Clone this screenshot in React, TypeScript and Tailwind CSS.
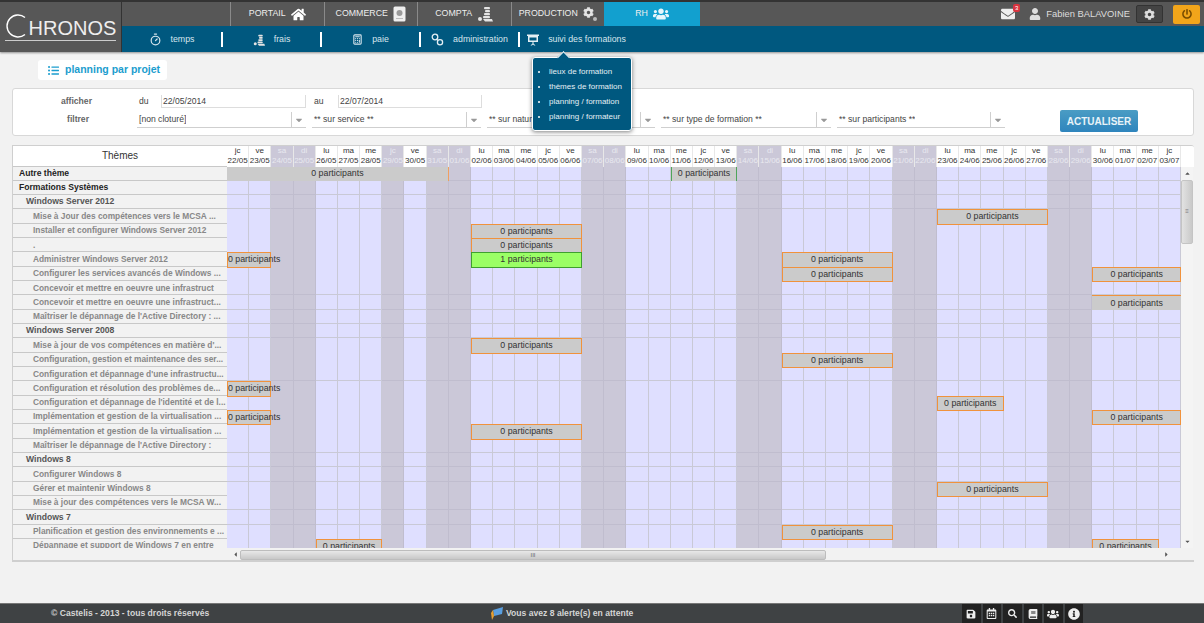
import React from "react";
import { Timer, Calculator } from "lucide-react";
import {
  FaHome, FaUsers, FaCog, FaEnvelope, FaUser, FaPowerOff, FaSave, FaSearch, FaInfoCircle, FaBook, FaListUl,
  FaCaretDown, FaCaretUp, FaCaretLeft, FaCaretRight, FaRegCalendarAlt,
} from "react-icons/fa";

const dayNames = ["jc", "ve", "sa", "di", "lu", "ma", "me"];
const greyCols = [2, 3, 7, 9, 10, 16, 17, 23, 24, 30, 31, 37, 38];

const days = Array.from({ length: 43 }, (_, i) => {
  const d = new Date(2014, 4, 22 + i);
  return {
    name: dayNames[i % 7],
    date: String(d.getDate()).padStart(2, "0") + "/" + String(d.getMonth() + 1).padStart(2, "0"),
    grey: greyCols.includes(i),
  };
});

type Bar = { start: number; span: number; label?: string; kind?: "green" | "top" | "open" | "greenEdge" };
type Row = { label: string; level: 1 | 2 | 3; bars?: Bar[] };

const rows: Row[] = [
  { label: "Autre thème", level: 1, bars: [{ start: 0, span: 10, kind: "open" }, { start: 20, span: 3, kind: "greenEdge" }] },
  { label: "Formations Systèmes", level: 1 },
  { label: "Windows Server 2012", level: 2 },
  { label: "Mise à Jour des compétences vers le MCSA ...", level: 3, bars: [{ start: 32, span: 5 }] },
  { label: "Installer et configurer Windows Server 2012", level: 3, bars: [{ start: 11, span: 5 }] },
  { label: ".", level: 3, bars: [{ start: 11, span: 5 }] },
  { label: "Administrer Windows Server 2012", level: 3, bars: [{ start: 0, span: 2 }, { start: 11, span: 5, kind: "green", label: "1 participants" }, { start: 25, span: 5 }] },
  { label: "Configurer les services avancés de Windows ...", level: 3, bars: [{ start: 25, span: 5 }, { start: 39, span: 4 }] },
  { label: "Concevoir et mettre en oeuvre une infrastruct", level: 3 },
  { label: "Concevoir et mettre en oeuvre une infrastruct...", level: 3, bars: [{ start: 39, span: 4, kind: "top" }] },
  { label: "Maîtriser le dépannage de l'Active Directory : ...", level: 3 },
  { label: "Windows Server 2008", level: 2 },
  { label: "Mise à jour de vos compétences en matière d'...", level: 3, bars: [{ start: 11, span: 5 }] },
  { label: "Configuration, gestion et maintenance des ser...", level: 3, bars: [{ start: 25, span: 5 }] },
  { label: "Configuration et dépannage d'une infrastructu...", level: 3 },
  { label: "Configuration et résolution des problèmes de...", level: 3, bars: [{ start: 0, span: 2 }] },
  { label: "Configuration et dépannage de l'identité et de l...", level: 3, bars: [{ start: 32, span: 3 }] },
  { label: "Implémentation et gestion de la virtualisation ...", level: 3, bars: [{ start: 0, span: 2 }, { start: 39, span: 4 }] },
  { label: "Implémentation et gestion de la virtualisation ...", level: 3, bars: [{ start: 11, span: 5 }] },
  { label: "Maîtriser le dépannage de l'Active Directory :", level: 3 },
  { label: "Windows 8", level: 2 },
  { label: "Configurer Windows 8", level: 3 },
  { label: "Gérer et maintenir Windows 8", level: 3, bars: [{ start: 32, span: 5 }] },
  { label: "Mise à jour des compétences vers le MCSA W...", level: 3 },
  { label: "Windows 7", level: 2 },
  { label: "Planification et gestion des environnements e ...", level: 3, bars: [{ start: 25, span: 5 }] },
  { label: "Dépannage et support de Windows 7 en entre", level: 3, bars: [{ start: 4, span: 3 }, { start: 39, span: 3 }] },
];

// icons drawn by hand, the packages have nothing close
function CoinsIcon({ size = 16 }: { size?: number }) {
  return (
    <svg width={size} height={size} viewBox="0 0 16 16" fill="#e4e4e4">
      <circle cx="3" cy="13" r="2" />
      <rect x="7" y="1" width="6" height="2.2" rx="1" />
      <rect x="8" y="4" width="5" height="2.2" rx="1" />
      <rect x="7" y="7" width="6" height="2.2" rx="1" />
      <rect x="6" y="10" width="7" height="2.2" rx="1" />
      <path d="M6 13h9l1 2.5H8z" />
    </svg>
  );
}

function BookIcon() {
  return (
    <svg width="13" height="16" viewBox="0 0 13 16">
      <rect x="0.5" y="0.5" width="12" height="15" rx="1.5" fill="#eee" />
      <circle cx="6.5" cy="7" r="3" fill="#999" />
      <rect x="3" y="12" width="7" height="1" fill="#bbb" />
    </svg>
  );
}

function GearDotIcon() {
  return (
    <span className="relative block h-[14px] w-[14px] text-[#e4e4e4]">
      <FaCog size={11} />
      <span className="absolute bottom-0 right-0 h-[4px] w-[4px] rounded-full bg-[#bbb]" />
    </span>
  );
}

function LinksIcon() {
  return (
    <svg width="13" height="13" viewBox="0 0 13 13" fill="none" stroke="#e4eff4" strokeWidth="1.3">
      <circle cx="4" cy="4" r="2.8" />
      <circle cx="9" cy="9.2" r="2.6" />
      <path d="M6 6.5l1 1" />
    </svg>
  );
}

function BoardIcon() {
  return (
    <svg width="12" height="12" viewBox="0 0 12 12" fill="#e4eff4">
      <rect x="0" y="0.5" width="12" height="1.5" />
      <path d="M1 2h10v6H1zM2.5 3.5v3h7v-3z" fillRule="evenodd" />
      <path d="M5.5 8h1v1.5l2 2h-1.2L6 10.4 4.7 11.5H3.5l2-2z" />
    </svg>
  );
}

function barClass(kind?: Bar["kind"]) {
  if (kind === "green") return "bg-[#9bff66] border border-[#3f9f2f]";
  if (kind === "top") return "bg-[#cbcbcb] border-t border-[#f0923c]";
  if (kind === "open") return "bg-[#cbcbcb] border-r border-[#f0a060]";
  if (kind === "greenEdge") return "bg-[#cbcbcb] border-l border-r border-[#4fa55a]";
  return "bg-[#cbcbcb] border border-[#f0923c]";
}

function PlanningRow({ row }: { row: Row }) {
  const cells: React.ReactNode[] = [];
  for (let i = 0; i < 43; i++) {
    const bar = row.bars?.find((b) => b.start === i);
    if (bar) {
      cells.push(
        <div
          key={i}
          className={"relative z-[1] flex items-center [justify-content:safe_center] whitespace-nowrap text-[8.8px] text-[#333] " + barClass(bar.kind)}
          style={{ gridColumn: "span " + bar.span }}
        >
          {bar.label ?? "0 participants"}
        </div>
      );
      i += bar.span - 1;
    } else {
      cells.push(
        <div key={i} className={"border-r border-b " + (days[i].grey ? "border-[#c0bdce] bg-[#cbc8d8]" : "border-[#c9c9d6] bg-[#dfdfff]")} />
      );
    }
  }
  const labelClass =
    row.level === 1
      ? "pl-[6px] text-[8.6px] font-bold text-[#222]"
      : row.level === 2
      ? "pl-[13px] text-[8.6px] font-bold text-[#555]"
      : "pl-[20px] text-[8.35px] font-bold text-[#888]";
  return (
    <div className="flex h-[14.33px] shrink-0">
      <div className={"flex w-[214px] shrink-0 items-center overflow-hidden whitespace-nowrap border-b border-[#c8c8c8] bg-[#f2f2f2] " + labelClass}>
        {row.label}
      </div>
      <div className="grid flex-1 grid-cols-[repeat(43,minmax(0,1fr))]">{cells}</div>
    </div>
  );
}

function TopTab({ label, icon, active }: { label: string; icon: React.ReactNode; active?: boolean }) {
  return (
    <div className={"flex h-full items-center justify-center gap-[5px] text-[8.8px] text-[#eee] " + (active ? "w-[96px] bg-[#12a0cf]" : "w-[93.5px] border-l border-[#8a8a8a]")}>
      <span>{label}</span>
      {icon}
    </div>
  );
}

function SubTab({ label, icon, width }: { label: string; icon: React.ReactNode; width: string }) {
  return (
    <div className={"flex items-center justify-center gap-[9px] pt-[1px] text-[8.8px] text-[#d7e6ee] " + width}>
      {icon}
      <span className="whitespace-nowrap">{label}</span>
    </div>
  );
}

function SubDivider() {
  return <div className="h-[15px] w-[2px] shrink-0 bg-white" />;
}

function SelectBox({ label, width }: { label: string; width: string }) {
  return (
    <div className={"flex h-[15px] items-center justify-between border-b border-[#cfcfcf] bg-white " + width}>
      <span className="truncate pl-[2px] text-[8.6px] text-[#444]">{label}</span>
      <span className="flex h-[15px] w-[15px] shrink-0 items-center justify-center border-l border-[#cfcfcf] text-[#999]">
        <FaCaretDown size={10} />
      </span>
    </div>
  );
}

function FooterIcon({ children }: { children: React.ReactNode }) {
  return <div className="flex h-[20px] w-[18.5px] items-center justify-center bg-[#222] text-[#eee]">{children}</div>;
}

export default function App() {
  return (
    <div className="flex h-[623px] w-[1204px] flex-col overflow-hidden bg-[#f2f2f2] font-['Liberation_Sans',Arial,sans-serif]">
      {/* bandeau haut */}
      <header className="relative flex h-[52px] shrink-0 border-t-2 border-[#333] shadow-[0_1px_2px_rgba(0,0,0,0.4)]">
        <div className="flex w-[122px] shrink-0 items-center justify-center border-r border-[#333] bg-[#575757] text-white">
          <div className="relative flex items-end border-b border-[#ccc] pb-[1px]">
            <svg width="26" height="26" viewBox="0 0 26 26" className="-mr-[2px]">
              <path d="M20 4.5 A11 11 0 1 0 20 21.5" fill="none" stroke="#fff" strokeWidth="1.4" />
            </svg>
            <span className="text-[20px] leading-[22px] text-[#eee]">HRONOS</span>
          </div>
        </div>
        <div className="flex flex-1 flex-col">
          <div className="flex h-[24px] items-center bg-[#575757]">
            <div className="w-[108px]" />
            <TopTab label="PORTAIL" icon={<FaHome size={15} color="#fff" />} />
            <TopTab label="COMMERCE" icon={<BookIcon />} />
            <TopTab label="COMPTA" icon={<CoinsIcon />} />
            <TopTab label="PRODUCTION" icon={<GearDotIcon />} />
            <TopTab active label="RH" icon={<FaUsers size={16} color="#e6f6fc" />} />
            <div className="flex flex-1 items-center justify-end pr-[4px]">
              <div className="relative">
                <FaEnvelope size={14} color="#eee" />
                <span className="absolute -right-[5px] -top-[3px] rounded-[2px] bg-[#d9343f] px-[2px] text-[6px] leading-[8px] text-white">3</span>
              </div>
              <FaUser size={12} color="#ddd" className="ml-[14px]" />
              <span className="ml-[5px] text-[9.4px] text-[#ddd]">Fabien BALAVOINE</span>
              <div className="ml-[6px] flex h-[18px] w-[27px] items-center justify-center rounded-[2px] border border-[#333] bg-[#444] text-[#ddd]">
                <FaCog size={11} />
              </div>
              <div className="ml-[10px] flex h-[19px] w-[27px] items-center justify-center rounded-[2px] bg-[#f2a51a] text-[#7a4d00]">
                <FaPowerOff size={10} />
              </div>
            </div>
          </div>
          <div className="flex h-[26px] items-center bg-[#00587f]">
            <SubTab width="w-[99px]" label="temps" icon={<Timer size={13} strokeWidth={2.2} />} />
            <SubDivider />
            <SubTab width="w-[97px]" label="frais" icon={<CoinsIcon size={12} />} />
            <SubDivider />
            <SubTab width="w-[97px]" label="paie" icon={<Calculator size={11} strokeWidth={2.4} />} />
            <SubDivider />
            <SubTab width="w-[97px]" label="administration" icon={<LinksIcon />} />
            <SubDivider />
            <SubTab width="w-[113px]" label="suivi des formations" icon={<BoardIcon />} />
          </div>
        </div>

        {/* menu déroulant */}
        <div className="absolute left-[532px] top-[55px] z-10 h-[74px] w-[100px] rounded-[3px] border border-white bg-[#00587f] pl-[5px] pt-[6px] text-[8px] text-[#e4eff4] shadow-[0_1px_4px_rgba(0,0,0,0.5)]">
          <div className="absolute -top-[5px] left-[26px] h-[9px] w-[9px] rotate-45 border-l border-t border-white bg-[#00587f]" />
          {["lieux de formation", "thèmes de formation", "planning / formation", "planning / formateur"].map((t) => (
            <div key={t} className="flex h-[15px] items-center gap-[9px] whitespace-nowrap">
              <span className="h-[2px] w-[2px] rounded-full bg-white" />
              {t}
            </div>
          ))}
        </div>
      </header>

      <main className="flex flex-1 flex-col px-[12px]">
        <div className="ml-[26px] mt-[8px] flex h-[20px] w-[129px] items-center gap-[6px] rounded-[3px] bg-white pl-[10px] text-[10.5px] font-bold text-[#1b9dce]">
          <FaListUl size={11} />
          planning par projet
        </div>

        {/* filtres */}
        <div className="mt-[8px] flex h-[48px] w-[1182px] rounded-[3px] border border-[#d8d8d8] bg-white">
          <div className="flex w-[124px] shrink-0 flex-col items-end gap-[5px] pr-[39px] pt-[6px] text-[8.6px] font-bold text-[#666]">
            <span className="pr-[6px]">afficher</span>
            <span className="pr-[9px]">filtrer</span>
          </div>
          <div className="flex flex-1 flex-col pt-[6px]">
            <div className="flex h-[13px] items-center text-[8.6px] text-[#444]">
              <span className="w-[24px] pl-[2px]">du</span>
              <div className="flex h-[13px] w-[145px] items-center border-b border-l border-r border-[#ddd] pl-[1px]">22/05/2014</div>
              <span className="w-[32px] pl-[8px]">au</span>
              <div className="flex h-[13px] w-[144px] items-center border-b border-l border-r border-[#ddd] pl-[1px]">22/07/2014</div>
            </div>
            <div className="mt-[1px] flex items-center gap-[6px]">
              <SelectBox width="w-[169px]" label="[non cloturé]" />
              <SelectBox width="w-[169px]" label="** sur service **" />
              <SelectBox width="w-[168px]" label="** sur nature de formation **" />
              <SelectBox width="w-[170px]" label="** sur type de formation **" />
              <SelectBox width="w-[168px]" label="** sur participants **" />
              <div className="ml-[49px] flex h-[22px] w-[78px] translate-y-[1px] items-center justify-center rounded-[2px] bg-[linear-gradient(#4a9cc4,#2f85bd)] text-[10px] font-bold text-[#e8f3f8]">
                ACTUALISER
              </div>
            </div>
          </div>
        </div>

        {/* planning */}
        <div className="mt-[9px] flex h-[417px] w-[1182px] flex-col overflow-hidden rounded-tr-[3px] border-b-2 border-l border-t border-[#cfcfcf] bg-[#f2f2f2]">
          <div className="flex h-[20.5px] shrink-0 bg-white">
            <div className="flex w-[214px] shrink-0 items-center justify-center border-b border-[#c8c8c8] text-[10px] text-[#333]">Thèmes</div>
            <div className="grid w-[954px] shrink-0 grid-cols-[repeat(43,minmax(0,1fr))]">
              {days.map((d) => (
                <div
                  key={d.date}
                  className={"flex flex-col items-center justify-center border-r border-[#e8e8e8] text-[8px] leading-[10px] " + (d.grey ? "bg-[#cbc8d8] text-[#e9e9f0]" : "bg-white text-[#333]")}
                >
                  <span>{d.name}</span>
                  <span className="whitespace-nowrap">{d.date}</span>
                </div>
              ))}
            </div>
          </div>
          <div className="flex h-[381.5px] shrink-0">
            <div className="flex w-[1168px] shrink-0 flex-col overflow-hidden">
              {rows.map((r, i) => (
                <PlanningRow key={i} row={r} />
              ))}
            </div>
            <div className="flex w-[12px] shrink-0 flex-col items-center bg-[#f4f4f4] text-[#555]">
              <FaCaretUp size={7} className="mt-[3px]" />
              <div className="mt-[3px] flex h-[64px] w-[12px] items-center justify-center rounded-[2px] border border-[#c4c4c4] bg-[linear-gradient(90deg,#e2e2e2,#c9c9c9)] text-[6px] leading-[3px] text-[#777]">
                ≡
              </div>
              <div className="flex-1" />
              <FaCaretDown size={7} className="mb-[3px]" />
            </div>
          </div>
          <div className="flex h-[13px] shrink-0 items-center">
            <div className="w-[214px] shrink-0 bg-[#f2f2f2]" />
            <FaCaretLeft size={7} className="ml-[5px] text-[#555]" />
            <div className="ml-[1px] flex h-[10px] w-[586px] items-center justify-center rounded-[2px] border border-[#bdbdbd] bg-[linear-gradient(#e8e8e8,#c8c8c8)] text-[6px] leading-[6px] text-[#666]">
              III
            </div>
            <div className="flex-1" />
            <FaCaretRight size={7} className="mr-[24px] text-[#555]" />
          </div>
        </div>
      </main>

      <footer className="flex h-[20px] shrink-0 items-center border-t border-[#777] bg-[#3f4244] text-[8.6px] font-bold text-[#d5d5d5]">
        <span className="w-[491px] pl-[51px]">© Castelis - 2013 - tous droits réservés</span>
        <svg width="13" height="14" viewBox="0 0 13 14">
          <path d="M2 3 L12 0 L11 7 L3 9 Z" fill="#5a9fe0" />
          <path d="M2 3 L3 9 L1 13 L0 6 Z" fill="#e8a030" />
        </svg>
        <span className="ml-[2px] w-[456px]">Vous avez 8 alerte(s) en attente</span>
        <div className="flex items-center gap-[2px]">
          <FooterIcon><FaSave size={10} /></FooterIcon>
          <FooterIcon><FaRegCalendarAlt size={11} /></FooterIcon>
          <FooterIcon><FaSearch size={9} /></FooterIcon>
          <FooterIcon><FaBook size={10} /></FooterIcon>
          <FooterIcon><FaUsers size={12} /></FooterIcon>
          <FooterIcon><FaInfoCircle size={12} /></FooterIcon>
        </div>
      </footer>
    </div>
  );
}
